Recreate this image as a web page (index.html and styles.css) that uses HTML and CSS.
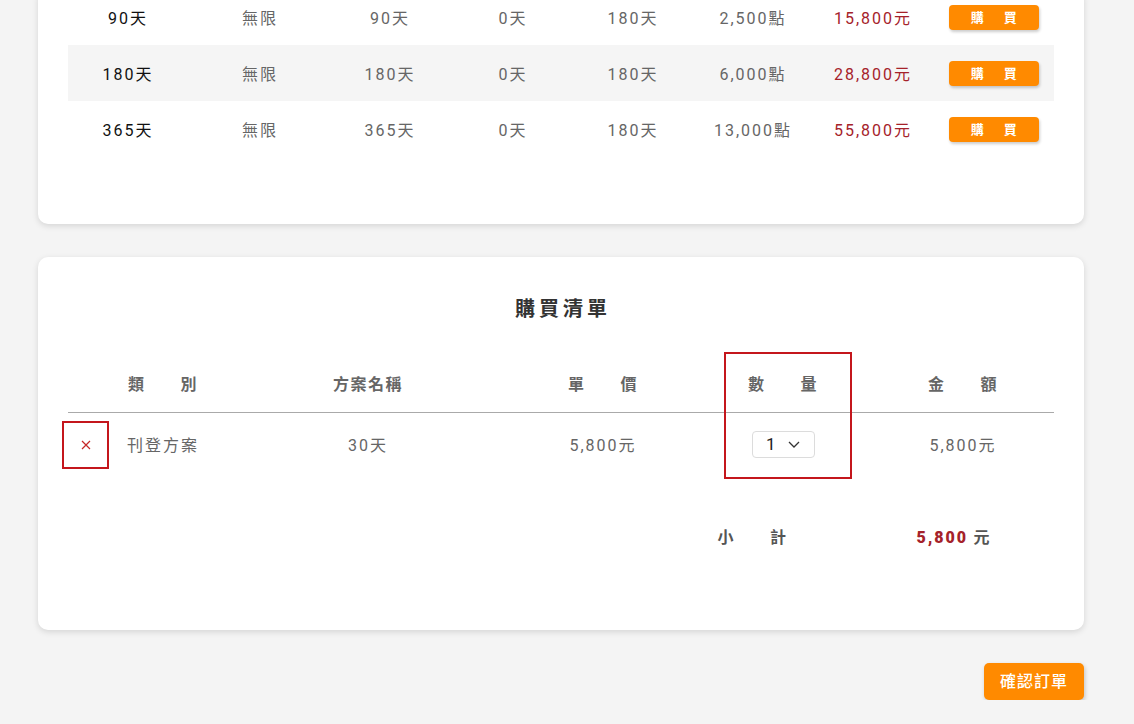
FILE: index.html
```html
<!DOCTYPE html>
<html lang="zh-Hant">
<head>
  <meta charset="UTF-8" />
  <meta name="viewport" content="width=device-width, initial-scale=1.0"/>
  <title>購買清單</title>
  <link rel="stylesheet" href="styles.css">
</head>
<body>
  <div class="page">
    <!-- Plans (scrolled, top part out of view) -->
    <div class="card plans">
      <div class="plan-row">
        <div class="c name">90天</div>
        <div class="c">無限</div>
        <div class="c">90天</div>
        <div class="c">0天</div>
        <div class="c">180天</div>
        <div class="c">2,500點</div>
        <div class="c price">15,800元</div>
        <div class="c"><a href="#" class="buy-btn">購　買</a></div>
      </div>
      <div class="plan-row alt">
        <div class="c name">180天</div>
        <div class="c">無限</div>
        <div class="c">180天</div>
        <div class="c">0天</div>
        <div class="c">180天</div>
        <div class="c">6,000點</div>
        <div class="c price">28,800元</div>
        <div class="c"><a href="#" class="buy-btn">購　買</a></div>
      </div>
      <div class="plan-row">
        <div class="c name">365天</div>
        <div class="c">無限</div>
        <div class="c">365天</div>
        <div class="c">0天</div>
        <div class="c">180天</div>
        <div class="c">13,000點</div>
        <div class="c price">55,800元</div>
        <div class="c"><a href="#" class="buy-btn">購　買</a></div>
      </div>
    </div>

    <!-- Cart -->
    <div class="card cart">
      <h2>購買清單</h2>
      <div class="cart-table">
        <div class="cart-row head">
          <div></div>
          <div>類　　別</div>
          <div>方案名稱</div>
          <div>單　　價</div>
          <div>數　　量</div>
          <div>金　　額</div>
          <div></div>
        </div>
        <div class="cart-row item">
          <div>
            <button class="remove" type="button">
              <svg width="10" height="10" viewBox="0 0 10 10"><path d="M1 1L9 9M9 1L1 9" stroke="#c62828" stroke-width="1.2" fill="none"/></svg>
            </button>
          </div>
          <div>刊登方案</div>
          <div>30天</div>
          <div>5,800元</div>
          <div>
            <div class="qty">
              <span>1</span>
              <svg width="12" height="7" viewBox="0 0 12 7"><path d="M1 1L6 6L11 1" stroke="#333" stroke-width="1.3" fill="none"/></svg>
            </div>
          </div>
          <div>5,800元</div>
          <div></div>
        </div>
        <div class="mark"></div>
      </div>
      <div class="subtotal">
        <span class="label">小　　計</span>
        <span class="sum"><b>5,800</b> 元</span>
      </div>
    </div>

    <div class="actions">
      <a href="#" class="confirm-btn">確認訂單</a>
    </div>
  </div>
</body>
</html>
```

FILE: styles.css
```css
* {
  margin: 0;
  padding: 0;
  box-sizing: border-box;
}

body {
  font-family: "Roboto", "Noto Sans CJK TC", sans-serif;
  background-color: #f4f4f4;
  color: #666;
  font-size: 16px;
  overflow: hidden;
}

.page {
  width: 1046px;
  margin-left: 38px;
  margin-top: -11px;
}

.card {
  background: #fff;
  border-radius: 10px;
  box-shadow: 0 2px 6px rgba(0, 0, 0, 0.13);
}

/* plans table */
.plans {
  padding: 0 30px 67px;
}

.plan-row {
  display: grid;
  grid-template-columns: 120px 144px 116px 130px 110px 130px 110px 1fr;
  height: 56px;
  align-items: center;
  letter-spacing: 2px;
}

.plan-row.alt {
  background-color: #f5f5f5;
}

.plan-row .c {
  text-align: center;
}

.plan-row .name {
  color: #111;
}

.plan-row .price {
  color: #a5222a;
}

.buy-btn {
  display: inline-block;
  width: 90px;
  height: 25px;
  line-height: 25px;
  margin-left: 6px;
  padding-left: 3px;
  background-color: #ff8a00;
  color: #fff;
  font-size: 13px;
  font-weight: 700;
  letter-spacing: 3.5px;
  text-decoration: none;
  border-radius: 4px;
  box-shadow: 1px 2px 3px rgba(0, 0, 0, 0.2);
}

/* cart */
.cart {
  margin-top: 33px;
  padding: 40px 30px 74px;
}

.cart h2 {
  text-align: center;
  font-size: 20px;
  line-height: 24px;
  font-weight: 700;
  color: #333;
  letter-spacing: 4px;
  padding-left: 4px;
}

.cart-table {
  position: relative;
  margin-top: 32px;
}

.cart-row {
  display: grid;
  grid-template-columns: 50px 90px 320px 150px 210px 150px 1fr;
  align-items: center;
  text-align: center;
  letter-spacing: 2px;
}

.cart-row.head {
  height: 60px;
  font-weight: 700;
  letter-spacing: 1.5px;
  border-bottom: 1px solid #aaa;
}

.cart-row.item {
  height: 62px;
}

.remove {
  display: flex;
  align-items: center;
  justify-content: center;
  width: 47px;
  height: 48px;
  margin-left: -6px;
  margin-top: 1px;
  background: none;
  border: 2px solid #c4161c;
  cursor: pointer;
}

.qty {
  display: inline-flex;
  align-items: center;
  justify-content: space-between;
  width: 63px;
  height: 27px;
  padding: 0 14px 0 13px;
  margin-left: 1px;
  border: 1px solid #dcdcdc;
  border-radius: 4px;
  color: #222;
  font-size: 17px;
  letter-spacing: 0;
}

.mark {
  position: absolute;
  left: 656px;
  top: -1px;
  width: 128px;
  height: 127px;
  border: 2px solid #c4161c;
}

.subtotal {
  display: flex;
  justify-content: flex-end;
  align-items: center;
  height: 40px;
  margin-top: 41px;
  padding-right: 63px;
  font-weight: 700;
  color: #555;
  letter-spacing: 1.5px;
}

.subtotal .label {
  width: 72px;
}

.subtotal .sum {
  margin-left: 127px;
}

.subtotal .sum b {
  color: #a5222a;
  letter-spacing: 2px;
}

.actions {
  display: flex;
  justify-content: flex-end;
  margin-top: 33px;
}

.confirm-btn {
  display: inline-block;
  width: 100px;
  height: 37px;
  line-height: 37px;
  text-align: center;
  background-color: #ff8a00;
  color: #fff;
  font-size: 16px;
  font-weight: 500;
  letter-spacing: 1px;
  text-decoration: none;
  border-radius: 5px;
  box-shadow: 1px 2px 4px rgba(0, 0, 0, 0.2);
}
```
